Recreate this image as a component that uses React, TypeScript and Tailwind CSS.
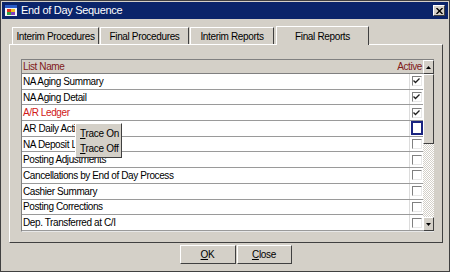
import React from 'react';

const rows = [
  { name: 'NA Aging Summary', active: true },
  { name: 'NA Aging Detail', active: true },
  { name: 'A/R Ledger', active: true, red: true },
  { name: 'AR Daily Activity', active: false, focus: true },
  { name: 'NA Deposit Ledger', active: false },
  { name: 'Posting Adjustments', active: false },
  { name: 'Cancellations by End of Day Process', active: false },
  { name: 'Cashier Summary', active: false },
  { name: 'Posting Corrections', active: false },
  { name: 'Dep. Transferred at C/I', active: false },
];

const tabs = [
  { label: 'Interim Procedures', width: 'w-[87px]' },
  { label: 'Final Procedures', width: 'w-[89px]' },
  { label: 'Interim Reports', width: 'w-[84px]' },
];

function Checkbox({ checked }: { checked: boolean }) {
  return (
    <div className="w-[10px] h-[10px] bg-white border-t border-l border-t-[#808080] border-l-[#808080] border-b border-r border-b-[#e8e8e8] border-r-[#e8e8e8] flex items-center justify-center">
      {checked && (
        <svg width="7" height="6" viewBox="0 0 7 6">
          <path d="M0.5 2.5 L2.5 4.5 L6.5 0.5" stroke="#202020" strokeWidth="1.3" fill="none" />
        </svg>
      )}
    </div>
  );
}

function ScrollButton({ up }: { up: boolean }) {
  return (
    <div className="h-[14px] w-full bg-[#d4d0c8] border border-t-white border-l-white border-r-[#404040] border-b-[#404040] flex items-center justify-center">
      <svg width="5" height="3" viewBox="0 0 5 3">
        <path d={up ? 'M2.5 0 L5 3 L0 3 Z' : 'M0 0 L5 0 L2.5 3 Z'} fill="#000" />
      </svg>
    </div>
  );
}

export default function App() {
  return (
    <div
      className="relative w-[450px] h-[272px] bg-[#d4d0c8] border border-[#404040] flex flex-col overflow-hidden"
      style={{ fontFamily: '"Liberation Sans", Arial, sans-serif' }}
    >
      {/* Title bar */}
      <div className="h-[17px] mx-px mt-px bg-[#0a246a] flex items-center pl-[3px] pr-[3px]">
        <svg width="13" height="13" viewBox="0 0 13 13">
          <rect x="0" y="1" width="12" height="11" fill="#f4f4f4" />
          <rect x="0" y="1" width="12" height="3" fill="#2a5cc8" />
          <rect x="2" y="5" width="4" height="3" fill="#e03020" />
          <rect x="6" y="5" width="4" height="3" fill="#f0c020" />
          <rect x="2" y="8" width="4" height="3" fill="#30a040" />
          <rect x="6" y="8" width="4" height="3" fill="#8040c0" />
        </svg>
        <span className="ml-[3px] text-white text-[11px] tracking-[-0.3px] leading-none">End of Day Sequence</span>
        <div className="ml-auto w-[12px] h-[11px] bg-[#d4d0c8] border border-t-white border-l-white border-r-[#404040] border-b-[#404040] flex items-center justify-center">
          <svg width="7" height="6" viewBox="0 0 7 6">
            <path d="M0.5 0 L6.5 6 M6.5 0 L0.5 6" stroke="#000" strokeWidth="1.4" />
          </svg>
        </div>
      </div>

      {/* Tabs */}
      <div className="flex items-end h-[25px] pl-[11px] pt-[5px] text-[10px] tracking-[-0.35px] text-black">
        {tabs.map((t) => (
          <div
            key={t.label}
            className={`${t.width} h-[17px] flex items-center justify-center border-t border-t-white border-l border-l-white border-r border-r-[#404040] mr-px`}
          >
            {t.label}
          </div>
        ))}
        <div className="h-[19px] w-[93px] ml-px flex items-center justify-center border-t border-l border-t-white border-l-white border-r border-r-[#404040] bg-[#d4d0c8] relative top-px">
          Final Reports
        </div>
      </div>

      {/* Panel */}
      <div className="ml-[8px] mr-[6px] h-[199px] border-t border-l border-t-white border-l-white border-r border-b border-r-[#404040] border-b-[#404040] pl-[11px] pr-[8px] pt-[14px]">
        <div className="flex h-[173px] border-t border-l border-t-[#808080] border-l-[#808080] border-b border-b-[#e8e8e8] text-[10px] tracking-[-0.4px]">
          <div className="flex-1 flex flex-col bg-white">
            <div className="h-[14px] bg-[#d4d0c8] border-b border-b-[#808080] flex items-center pl-[1px] pr-[1px] text-[#801818]">
              <span>List Name</span>
              <span className="ml-auto">Active</span>
            </div>
            {rows.map((r) => (
              <div key={r.name} className="h-[15.7px] flex items-center border-b border-b-[#9a9a9a]">
                <div className={`flex-1 pl-px truncate ${r.red ? 'text-[#d01818]' : 'text-black'}`}>{r.name}</div>
                <div className="w-[14px] h-full flex items-center justify-center border-l border-l-[#dcdcdc]">
                  {r.focus ? (
                    <div className="w-[12px] h-[14px] border-2 border-[#1a2480] flex items-center justify-center">
                      <div className="w-[8px] h-[9px] bg-white" />
                    </div>
                  ) : (
                    <Checkbox checked={r.active} />
                  )}
                </div>
              </div>
            ))}
          </div>
          {/* Scrollbar */}
          <div className="w-[11px] flex flex-col bg-[image:repeating-conic-gradient(#d4d0c8_0_25%,#ffffff_0_50%)] bg-[length:2px_2px]">
            <ScrollButton up />
            <div className="h-[70px] bg-[#d4d0c8] border border-t-white border-l-white border-r-[#404040] border-b-[#404040]" />
            <div className="flex-1" />
            <ScrollButton up={false} />
          </div>
        </div>
      </div>

      {/* Buttons */}
      <div className="flex justify-center pl-[21px] mt-[2px] text-[10px] tracking-[-0.3px]">
        <button className="w-[56px] h-[19px] border border-t-white border-l-white border-r-[#404040] border-b-[#404040] bg-[#d4d0c8]">
          <span className="underline">O</span>K
        </button>
        <button className="w-[55px] h-[19px] ml-px border border-t-white border-l-white border-r-[#404040] border-b-[#404040] bg-[#d4d0c8]">
          <span className="underline">C</span>lose
        </button>
      </div>

      {/* Context menu */}
      <div className="absolute left-[74px] top-[122px] w-[47px] h-[35px] bg-[#d4d0c8] border border-t-white border-l-white border-r-[#404040] border-b-[#404040] flex flex-col justify-center pl-[4px] text-[10px] tracking-[-0.3px] leading-[15px] text-black">
        <div><span className="underline">T</span>race On</div>
        <div><span className="underline">T</span>race Off</div>
      </div>
    </div>
  );
}
